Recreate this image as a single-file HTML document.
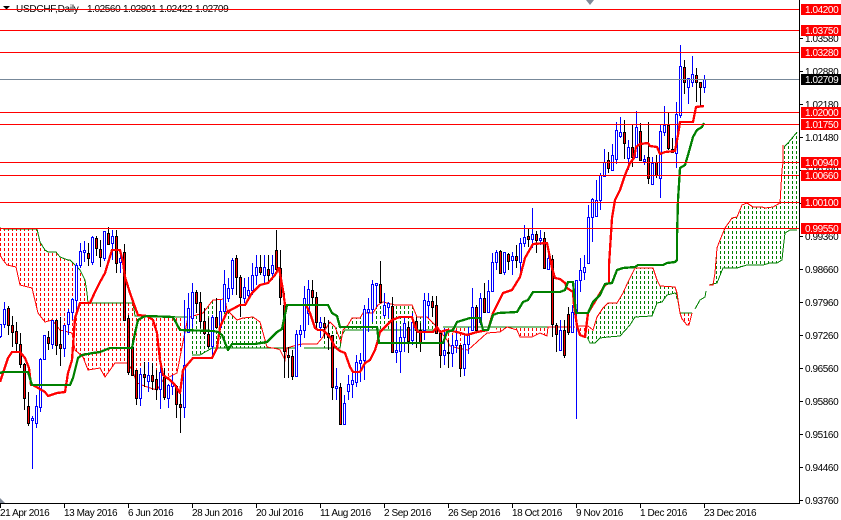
<!DOCTYPE html>
<html><head><meta charset="utf-8"><title>USDCHF,Daily</title>
<style>
html,body{margin:0;padding:0;background:#fff}
svg{display:block}
text{font-family:"Liberation Sans",sans-serif;font-size:10px;letter-spacing:-.42px;fill:#000}
.w{fill:#fff}
.d{letter-spacing:-.25px}
</style></head><body>
<svg width="841" height="520" viewBox="0 0 841 520" xmlns="http://www.w3.org/2000/svg">
<defs>
<clipPath id="cr">
<polygon points="0,229 37,229 40,242 45,250 48,252 56,252 60,257 68,260 70,260 80,270 85,280 87,293 88,303 133,303 135,316 188,317 185,332 182,347 177,373 163,380 157,390 147,387 137,383 133,372 128,363 115,363 105,377 100,368 88,370 83,357 75,350 72,333 60,330 52,320 45,322 38,313 32,288 20,285 16,267 7,265 3,260 0,255"/>
<polygon points="445,327 470,327 468,350 457,348 450,346 447,340"/>
<polygon points="493,327 548,327 547,336 540,333 532,337 520,337 517,330 507,327 500,332"/>
<polygon points="577,326 593,330 586,333 580,334"/>
<polygon points="680,313 692,313 689,325 687,325 682,319"/>
</clipPath>
<clipPath id="cg">
<polygon points="190,317 203,313 213,300 225,299 227,310 237,320 243,318 253,317 260,322 267,347 267,348 212,348 200,355 192,355"/>
<polygon points="322,348 340,348 343,335 345,330 335,327 330,322 325,330"/>
<polygon points="343,330 348,325 352,318 360,318 363,313 373,313 378,305 383,302 395,305 412,305 417,317 427,317 437,327 437,330"/>
<polygon points="586,330 593,330 597,317 603,308 608,303 617,303 623,293 628,282 635,268 653,268 657,280 660,286 675,287 677,293 680,313 675,293 667,295 662,302 657,303 652,316 635,317 630,325 620,336 608,337 600,338 595,343 590,343 587,337"/>
<polygon points="709,285 713,285 715,273 716,260 717,248 720,240 725,228 732,218 737,217 742,205 747,203 753,207 762,207 765,208 773,207 780,203 782,170 783,163 783,145 784,147 788,143 793,137 797,132 797,230 790,230 785,233 783,250 782,260 777,263 770,263 763,265 747,265 737,268 723,268 717,283"/>
</clipPath>
</defs>
<rect width="841" height="520" fill="#fff"/>

<!-- cloud hatching -->
<g clip-path="url(#cr)">
<path fill="none" stroke="#f00" stroke-width="1" stroke-dasharray="3 2" stroke-dashoffset="2" shape-rendering="crispEdges" d="M0.5 0v520m4-520v520m4-520v520m4-520v520m4-520v520m4-520v520m4-520v520m4-520v520m4-520v520m4-520v520m4-520v520m4-520v520m4-520v520m4-520v520m4-520v520m4-520v520m4-520v520m4-520v520m4-520v520m4-520v520m4-520v520m4-520v520m4-520v520m4-520v520m4-520v520m4-520v520m4-520v520m4-520v520m4-520v520m4-520v520m4-520v520m4-520v520m4-520v520m4-520v520m4-520v520m4-520v520m4-520v520m4-520v520m4-520v520m4-520v520m4-520v520m4-520v520m4-520v520m4-520v520m4-520v520m4-520v520m4-520v520m4-520v520 M444.5 0v520m4-520v520m4-520v520m4-520v520m4-520v520m4-520v520m4-520v520m4-520v520m4-520v520m4-520v520m4-520v520m4-520v520m4-520v520m4-520v520m4-520v520m4-520v520m4-520v520m4-520v520m4-520v520m4-520v520m4-520v520m4-520v520m4-520v520m4-520v520m4-520v520m4-520v520m4-520v520 M576.5 0v520m4-520v520m4-520v520m4-520v520m4-520v520 M680.5 0v520m4-520v520m4-520v520m4-520v520"/>
</g>
<g clip-path="url(#cg)">
<path fill="none" stroke="#008000" stroke-width="1" stroke-dasharray="3 2" stroke-dashoffset="4" shape-rendering="crispEdges" d="M192.5 0v520m4-520v520m4-520v520m4-520v520m4-520v520m4-520v520m4-520v520m4-520v520m4-520v520m4-520v520m4-520v520m4-520v520m4-520v520m4-520v520m4-520v520m4-520v520m4-520v520m4-520v520m4-520v520m4-520v520 M324.5 0v520m4-520v520m4-520v520m4-520v520m4-520v520m4-520v520m4-520v520m4-520v520m4-520v520m4-520v520m4-520v520m4-520v520m4-520v520m4-520v520m4-520v520m4-520v520m4-520v520m4-520v520m4-520v520m4-520v520m4-520v520m4-520v520m4-520v520m4-520v520m4-520v520m4-520v520m4-520v520m4-520v520m4-520v520m4-520v520 M588.5 0v520m4-520v520m4-520v520m4-520v520m4-520v520m4-520v520m4-520v520m4-520v520m4-520v520m4-520v520m4-520v520m4-520v520m4-520v520m4-520v520m4-520v520m4-520v520m4-520v520m4-520v520m4-520v520m4-520v520m4-520v520m4-520v520m4-520v520m4-520v520 M712.5 0v520m4-520v520m4-520v520m4-520v520m4-520v520m4-520v520m4-520v520m4-520v520m4-520v520m4-520v520m4-520v520m4-520v520m4-520v520m4-520v520m4-520v520m4-520v520m4-520v520m4-520v520m4-520v520m4-520v520m4-520v520m4-520v520m4-520v520"/>
</g>

<!-- cloud outlines -->
<g fill="none" stroke-width="1" shape-rendering="crispEdges">
<g stroke="#008000">
<polyline points="0,228 4,229 37,229 40,242 45,250 48,252 56,252 60,257 68,260 70,260 80,270 85,280 87,293 88,303 133,303 135,316 188,317"/>
<polyline points="192,355 200,355 212,348 297,348"/>
<polyline points="304,348 322,348 340,348 342,335 345,330 437,330"/>
<polyline points="443,327 575,327"/>
<polyline points="587,337 590,343 595,343 600,338 608,337 620,336 630,325 635,317 652,316 657,303 662,302 667,295 675,293 677,295 680,313 692,313"/>
<polyline points="695,309 700,300 705,297 706,291"/>
<polyline points="709,285 717,283 723,268 737,268 747,265 763,265 770,263 777,263 782,260 783,250 785,233 790,230 797,230"/>
<polyline points="784,147 788,143 793,137 797,132"/>
</g>
<g stroke="#f00">
<polyline points="0,255 3,260 7,265 16,267 20,285 32,288 38,313 45,322 52,320 60,330 72,333 75,350 83,357 88,370 100,368 105,377 115,363 128,363 133,372 137,383 147,387 157,390 163,380 177,373 182,347 185,332 188,317 190,317 203,313 213,300 225,299 227,310 237,320 243,318 253,317 260,322 267,347 278,349 280,350 285,360 287,348 297,345 303,344 317,344 323,337 325,330 330,322 335,327 341,342 343,330 348,325 352,318 360,318 363,313 373,313 378,305 383,302 395,305 412,305 417,317 427,317 437,327 447,340 450,346 457,348 468,350 477,342 487,333 500,332 507,327 517,330 520,337 532,337 540,333 547,336 548,327 575,327"/>
<polyline points="577,326 588,326 593,330 597,317 603,308 608,303 617,303 623,293 628,282 635,268 653,268 657,280 660,286 675,287 677,293 680,313 682,319 687,325 689,325 692,313"/>
<polyline points="709,285 713,285 715,273 716,260 717,248 720,240 725,228 732,218 737,217 742,205 747,203 753,207 762,207 765,208 773,207 780,203 782,170 783,163 783,145" />
</g>
</g>

<!-- candles -->
<g shape-rendering="crispEdges" stroke-width="1">
<path fill="none" stroke="#00f" d="M0.5 324V338M4.5 302V328M32.5 416V469M36.5 395V428M40.5 358V412M44.5 335V359M52.5 320V349M64.5 325V357M68.5 309V335M72.5 298V320M76.5 263V310M80.5 243V268M84.5 241V262M92.5 236V265M104.5 231V261M112.5 230V260M120.5 250V273M140.5 368V406M148.5 362V392M160.5 365V409M168.5 384V408M172.5 375V395M184.5 300V418M188.5 293V333M192.5 283V328M212.5 315V357M220.5 300V328M224.5 270V312M228.5 278V302M232.5 258V295M244.5 278V303M248.5 277V300M252.5 263V295M256.5 255V285M264.5 255V283M272.5 255V280M296.5 330V377M300.5 325V347M304.5 286V338M308.5 280V325M320.5 317V338M336.5 368V400M344.5 395V425M348.5 375V400M352.5 372V398M356.5 355V387M360.5 353V382M364.5 305V380M368.5 298V332M372.5 280V322M376.5 283V307M384.5 293V318M388.5 302V318M396.5 323V363M400.5 327V373M404.5 317V352M412.5 313V345M424.5 293V340M428.5 293V318M444.5 328V365M452.5 335V367M456.5 330V353M464.5 335V376M468.5 327V354M472.5 288V330M480.5 293V325M488.5 280V313M492.5 253V291M496.5 250V270M504.5 252V275M512.5 252V275M520.5 238V272M524.5 225V247M532.5 208V248M540.5 230V245M548.5 255V270M560.5 320V350M572.5 305V332M576.5 280V419M580.5 258V292M584.5 255V280M588.5 205V263M592.5 198V242M596.5 180V210M600.5 173V210M604.5 149V177M612.5 144V170M616.5 122V164M620.5 117V138M628.5 140V170M636.5 111V157M644.5 155V165M652.5 157V184M660.5 125V198M664.5 106V136M676.5 102V168M680.5 45V118M688.5 78V104M692.5 56V87M704.5 75V93"/>
<path fill="#fff" stroke="#00f" d="M-.5 324.5h2V336.5h-2zM3.5 309.5h2V324.5h-2zM31.5 418.5h2V420.5h-2zM35.5 406.5h2V423.5h-2zM39.5 359.5h2V407.5h-2zM43.5 335.5h2V359.5h-2zM51.5 320.5h2V344.5h-2zM63.5 325.5h2V348.5h-2zM67.5 312.5h2V324.5h-2zM71.5 299.5h2V312.5h-2zM75.5 265.5h2V300.5h-2zM79.5 251.5h2V265.5h-2zM83.5 250.5h2V252.5h-2zM91.5 237.5h2V262.5h-2zM103.5 231.5h2V258.5h-2zM111.5 236.5h2V243.5h-2zM119.5 258.5h2V262.5h-2zM139.5 374.5h2V398.5h-2zM147.5 375.5h2V381.5h-2zM159.5 372.5h2V389.5h-2zM167.5 385.5h2V398.5h-2zM171.5 383.5h2V386.5h-2zM183.5 365.5h2V407.5h-2zM187.5 308.5h2V332.5h-2zM191.5 292.5h2V318.5h-2zM211.5 317.5h2V346.5h-2zM219.5 311.5h2V327.5h-2zM223.5 284.5h2V311.5h-2zM227.5 288.5h2V298.5h-2zM231.5 260.5h2V288.5h-2zM243.5 287.5h2V298.5h-2zM247.5 290.5h2V295.5h-2zM251.5 275.5h2V290.5h-2zM255.5 267.5h2V275.5h-2zM263.5 267.5h2V275.5h-2zM271.5 265.5h2V273.5h-2zM295.5 334.5h2V376.5h-2zM299.5 330.5h2V334.5h-2zM303.5 298.5h2V330.5h-2zM307.5 289.5h2V313.5h-2zM319.5 322.5h2V327.5h-2zM335.5 386.5h2V388.5h-2zM343.5 403.5h2V424.5h-2zM347.5 384.5h2V391.5h-2zM351.5 380.5h2V384.5h-2zM355.5 362.5h2V382.5h-2zM359.5 360.5h2V363.5h-2zM363.5 309.5h2V360.5h-2zM367.5 309.5h2V312.5h-2zM371.5 284.5h2V309.5h-2zM375.5 283.5h2V285.5h-2zM383.5 305.5h2V315.5h-2zM387.5 303.5h2V307.5h-2zM395.5 350.5h2V352.5h-2zM399.5 337.5h2V351.5h-2zM403.5 323.5h2V337.5h-2zM411.5 322.5h2V340.5h-2zM423.5 300.5h2V330.5h-2zM427.5 301.5h2V305.5h-2zM443.5 350.5h2V355.5h-2zM451.5 345.5h2V353.5h-2zM455.5 340.5h2V345.5h-2zM463.5 344.5h2V368.5h-2zM467.5 335.5h2V344.5h-2zM471.5 307.5h2V330.5h-2zM479.5 298.5h2V322.5h-2zM487.5 291.5h2V312.5h-2zM491.5 262.5h2V291.5h-2zM495.5 252.5h2V262.5h-2zM503.5 252.5h2V272.5h-2zM511.5 256.5h2V260.5h-2zM519.5 243.5h2V262.5h-2zM523.5 237.5h2V243.5h-2zM531.5 234.5h2V239.5h-2zM539.5 238.5h2V240.5h-2zM547.5 258.5h2V269.5h-2zM559.5 330.5h2V350.5h-2zM571.5 312.5h2V332.5h-2zM575.5 280.5h2V312.5h-2zM579.5 270.5h2V280.5h-2zM583.5 267.5h2V272.5h-2zM587.5 217.5h2V263.5h-2zM591.5 199.5h2V217.5h-2zM595.5 200.5h2V216.5h-2zM599.5 175.5h2V200.5h-2zM603.5 162.5h2V176.5h-2zM611.5 155.5h2V170.5h-2zM615.5 130.5h2V159.5h-2zM619.5 132.5h2V136.5h-2zM627.5 147.5h2V158.5h-2zM635.5 127.5h2V157.5h-2zM643.5 159.5h2V161.5h-2zM651.5 163.5h2V184.5h-2zM659.5 131.5h2V178.5h-2zM663.5 125.5h2V132.5h-2zM675.5 114.5h2V153.5h-2zM679.5 66.5h2V115.5h-2zM687.5 78.5h2V87.5h-2zM691.5 74.5h2V82.5h-2zM703.5 79.5h2V87.5h-2z"/>
<path fill="none" stroke="#000" d="M8.5 306V335M12.5 316V347M16.5 322V353M20.5 333V368M24.5 363V410M28.5 392V426M48.5 331V350M56.5 319V355M60.5 317V366M88.5 243V266M96.5 236V256M100.5 240V267M108.5 227V245M116.5 230V273M124.5 244V320M128.5 315V375M132.5 340V375M136.5 370V405M144.5 362V387M152.5 363V390M156.5 370V400M164.5 368V400M176.5 385V418M180.5 385V433M196.5 290V313M200.5 292V328M204.5 308V335M208.5 318V348M216.5 298V328M236.5 255V295M240.5 275V317M260.5 255V275M268.5 255V283M276.5 230V273M280.5 250V305M284.5 293V378M288.5 347V378M292.5 350V380M312.5 280V305M316.5 292V330M324.5 317V338M328.5 320V350M332.5 335V400M340.5 383V425M380.5 261V302M392.5 297V353M408.5 322V353M416.5 317V348M420.5 323V352M432.5 296V317M436.5 296V333M440.5 330V368M448.5 340V368M460.5 345V377M476.5 305V332M484.5 283V313M500.5 250V273M508.5 253V270M516.5 245V268M528.5 228V247M536.5 231V253M544.5 232V269M552.5 255V337M556.5 323V352M564.5 320V358M568.5 307V335M608.5 152V173M624.5 120V159M632.5 125V167M640.5 123V161M648.5 122V184M656.5 155V178M668.5 113V150M672.5 138V153M684.5 60V94M696.5 68V102M700.5 82V106"/>
<path fill="#f00" stroke="#000" d="M7.5 308.5h2V325.5h-2zM11.5 325.5h2V332.5h-2zM15.5 331.5h2V343.5h-2zM19.5 344.5h2V364.5h-2zM23.5 364.5h2V398.5h-2zM27.5 406.5h2V423.5h-2zM47.5 337.5h2V343.5h-2zM55.5 320.5h2V345.5h-2zM59.5 344.5h2V348.5h-2zM87.5 253.5h2V258.5h-2zM95.5 238.5h2V248.5h-2zM99.5 249.5h2V257.5h-2zM107.5 233.5h2V244.5h-2zM115.5 236.5h2V263.5h-2zM123.5 252.5h2V320.5h-2zM127.5 318.5h2V372.5h-2zM131.5 347.5h2V375.5h-2zM135.5 370.5h2V398.5h-2zM143.5 374.5h2V377.5h-2zM151.5 375.5h2V381.5h-2zM155.5 379.5h2V389.5h-2zM163.5 377.5h2V397.5h-2zM175.5 386.5h2V404.5h-2zM179.5 404.5h2V407.5h-2zM195.5 292.5h2V303.5h-2zM199.5 302.5h2V321.5h-2zM203.5 321.5h2V333.5h-2zM207.5 334.5h2V346.5h-2zM215.5 317.5h2V327.5h-2zM235.5 258.5h2V277.5h-2zM239.5 277.5h2V297.5h-2zM259.5 267.5h2V272.5h-2zM267.5 269.5h2V275.5h-2zM275.5 250.5h2V269.5h-2zM279.5 268.5h2V297.5h-2zM283.5 305.5h2V351.5h-2zM287.5 355.5h2V357.5h-2zM291.5 356.5h2V376.5h-2zM311.5 290.5h2V297.5h-2zM315.5 297.5h2V322.5h-2zM323.5 323.5h2V327.5h-2zM327.5 333.5h2V337.5h-2zM331.5 335.5h2V387.5h-2zM339.5 387.5h2V424.5h-2zM379.5 284.5h2V302.5h-2zM391.5 306.5h2V352.5h-2zM407.5 327.5h2V341.5h-2zM415.5 321.5h2V330.5h-2zM419.5 330.5h2V342.5h-2zM431.5 301.5h2V307.5h-2zM435.5 305.5h2V333.5h-2zM439.5 333.5h2V355.5h-2zM447.5 352.5h2V353.5h-2zM459.5 345.5h2V368.5h-2zM475.5 307.5h2V330.5h-2zM483.5 298.5h2V312.5h-2zM499.5 251.5h2V273.5h-2zM507.5 254.5h2V261.5h-2zM515.5 256.5h2V260.5h-2zM527.5 236.5h2V239.5h-2zM535.5 234.5h2V240.5h-2zM543.5 238.5h2V268.5h-2zM551.5 259.5h2V324.5h-2zM555.5 325.5h2V334.5h-2zM563.5 330.5h2V355.5h-2zM567.5 314.5h2V332.5h-2zM607.5 160.5h2V168.5h-2zM623.5 132.5h2V143.5h-2zM631.5 147.5h2V157.5h-2zM639.5 131.5h2V160.5h-2zM647.5 157.5h2V178.5h-2zM655.5 162.5h2V175.5h-2zM667.5 125.5h2V148.5h-2zM671.5 149.5h2V152.5h-2zM683.5 67.5h2V82.5h-2zM695.5 75.5h2V82.5h-2zM699.5 82.5h2V87.5h-2z"/>
</g>

<!-- tenkan -->
<polyline fill="none" stroke="#f00" stroke-width="2.3" stroke-linejoin="round" shape-rendering="crispEdges" points="0,382 4,370 8,358 12,352 20,352 25,358 29,368 31,385 33,385 45,392 48,396 57,393 65,392 68,373 72,360 75,318 80,303 90,303 95,292 100,282 105,273 112,250 120,250 123,262 125,277 130,293 135,307 138,315 147,316 153,320 157,333 160,360 163,375 170,380 175,385 180,393 183,370 187,365 193,358 212,358 217,348 220,327 227,312 240,305 245,305 252,293 260,285 268,283 275,275 279,268 283,290 285,305 306,305 310,313 315,328 318,330 323,330 330,337 335,347 340,351 345,353 350,367 353,372 360,372 365,363 370,360 375,350 378,340 380,332 387,325 392,320 400,317 412,317 415,327 418,332 433,332 437,327 440,332 447,330 457,332 467,335 477,332 488,330 493,313 498,303 503,293 512,290 520,277 525,258 533,244 547,243 552,268 555,278 560,279 565,283 567,288 573,292 574,305 577,326 580,335 585,337 588,313 605,285 609,283 609,265 612,218 615,200 620,190 625,175 630,163 634,158 636,147 640,144 648,143 650,146 657,147 660,154 665,152 675,151 678,135 680,122 693,122 696,107 704,106"/>
<!-- kijun -->
<polyline fill="none" stroke="#008000" stroke-width="2.3" stroke-linejoin="round" shape-rendering="crispEdges" points="0,373 3,372 28,372 32,385 70,385 73,378 78,358 82,355 93,353 100,352 110,348 132,348 135,333 138,320 143,317 147,316 173,317 180,330 213,331 218,332 222,335 228,350 232,344 255,344 267,342 277,332 282,329 287,305 328,305 332,313 337,316 340,327 377,327 379,343 443,343 447,332 453,330 457,322 470,318 480,318 483,330 488,330 493,315 498,313 517,312 523,302 528,300 533,292 560,292 565,290 568,282 573,282 574,293 576,313 588,313 593,302 600,295 605,284 612,283 617,270 623,268 635,267 638,265 663,265 667,263 675,262 677,260 677,237 678,200 680,168 685,165 688,155 693,137 697,130 702,127 704,123"/>

<!-- markers -->
<polygon points="586,0 594,0 590,5" fill="#808a99"/>
<polygon points="0,498 5,503 0,503" fill="#808a99"/>

<!-- header -->
<polygon points="3,6 10,6 6.5,9.5" fill="#000"/>
<text class="d" x="16" y="12">USDCHF,Daily</text>
<text x="87" y="12">1.02560</text><text x="123" y="12">1.02801</text><text x="159" y="12">1.02422</text><text x="195" y="12">1.02709</text>

<!-- horizontal levels -->
<g shape-rendering="crispEdges" stroke-width="1">
<path stroke="#778899" d="M0 79.5H799"/>
<path stroke="#f00" d="M0 9.5H799M0 30.5H799M0 52.5H799M0 112.5H799M0 124.5H799M0 162.5H799M0 175.5H799M0 202.5H799M0 228.5H799"/>
<!-- axes -->
<path stroke="#000" d="M799.5 0V504M0 503.5H800"/>
<path stroke="#000" d="M800 38.5h3M800 71.5h3M800 104.5h3M800 137.5h3M800 170.5h3M800 203.5h3M800 236.5h3M800 269.5h3M800 302.5h3M800 335.5h3M800 368.5h3M800 401.5h3M800 434.5h3M800 467.5h3M800 500.5h3"/>
<path stroke="#000" d="M0.5 504v4M64.5 504v4M128.5 504v4M192.5 504v4M256.5 504v4M320.5 504v4M384.5 504v4M448.5 504v4M512.5 504v4M576.5 504v4M640.5 504v4M704.5 504v4"/>
</g>

<!-- y axis labels -->
<text x="805" y="42">1.03580</text>
<text x="805" y="75">1.02880</text>
<text x="805" y="108">1.02180</text>
<text x="805" y="141">1.01480</text>
<text x="805" y="174">1.00780</text>
<text x="805" y="207">1.00080</text>
<text x="805" y="240">0.99360</text>
<text x="805" y="273">0.98660</text>
<text x="805" y="306">0.97960</text>
<text x="805" y="339">0.97260</text>
<text x="805" y="372">0.96560</text>
<text x="805" y="405">0.95860</text>
<text x="805" y="438">0.95160</text>
<text x="805" y="471">0.94460</text>
<text x="805" y="504">0.93760</text>

<!-- price boxes -->
<g shape-rendering="crispEdges">
<rect x="801" y="4" width="40" height="11" fill="#f00"/>
<rect x="801" y="25" width="40" height="11" fill="#f00"/>
<rect x="801" y="47" width="40" height="11" fill="#f00"/>
<rect x="801" y="74" width="40" height="11" fill="#000"/>
<rect x="801" y="107" width="40" height="11" fill="#f00"/>
<rect x="801" y="119" width="40" height="11" fill="#f00"/>
<rect x="801" y="157" width="40" height="11" fill="#f00"/>
<rect x="801" y="170" width="40" height="11" fill="#f00"/>
<rect x="801" y="197" width="40" height="11" fill="#f00"/>
<rect x="801" y="223" width="40" height="11" fill="#f00"/>
</g>
<text class="w" x="805" y="13">1.04200</text>
<text class="w" x="805" y="34">1.03750</text>
<text class="w" x="805" y="56">1.03280</text>
<text class="w" x="805" y="83">1.02709</text>
<text class="w" x="805" y="116">1.02000</text>
<text class="w" x="805" y="128">1.01750</text>
<text class="w" x="805" y="166">1.00940</text>
<text class="w" x="805" y="179">1.00660</text>
<text class="w" x="805" y="206">1.00100</text>
<text class="w" x="805" y="232">0.99550</text>

<!-- x axis labels -->
<text x="0" y="516">21 Apr 2016</text>
<text x="64" y="516">13 May 2016</text>
<text x="128" y="516">6 Jun 2016</text>
<text x="192" y="516">28 Jun 2016</text>
<text x="256" y="516">20 Jul 2016</text>
<text x="320" y="516">11 Aug 2016</text>
<text x="384" y="516">2 Sep 2016</text>
<text x="448" y="516">26 Sep 2016</text>
<text x="512" y="516">18 Oct 2016</text>
<text x="576" y="516">9 Nov 2016</text>
<text x="640" y="516">1 Dec 2016</text>
<text x="704" y="516">23 Dec 2016</text>
</svg>
</body></html>
